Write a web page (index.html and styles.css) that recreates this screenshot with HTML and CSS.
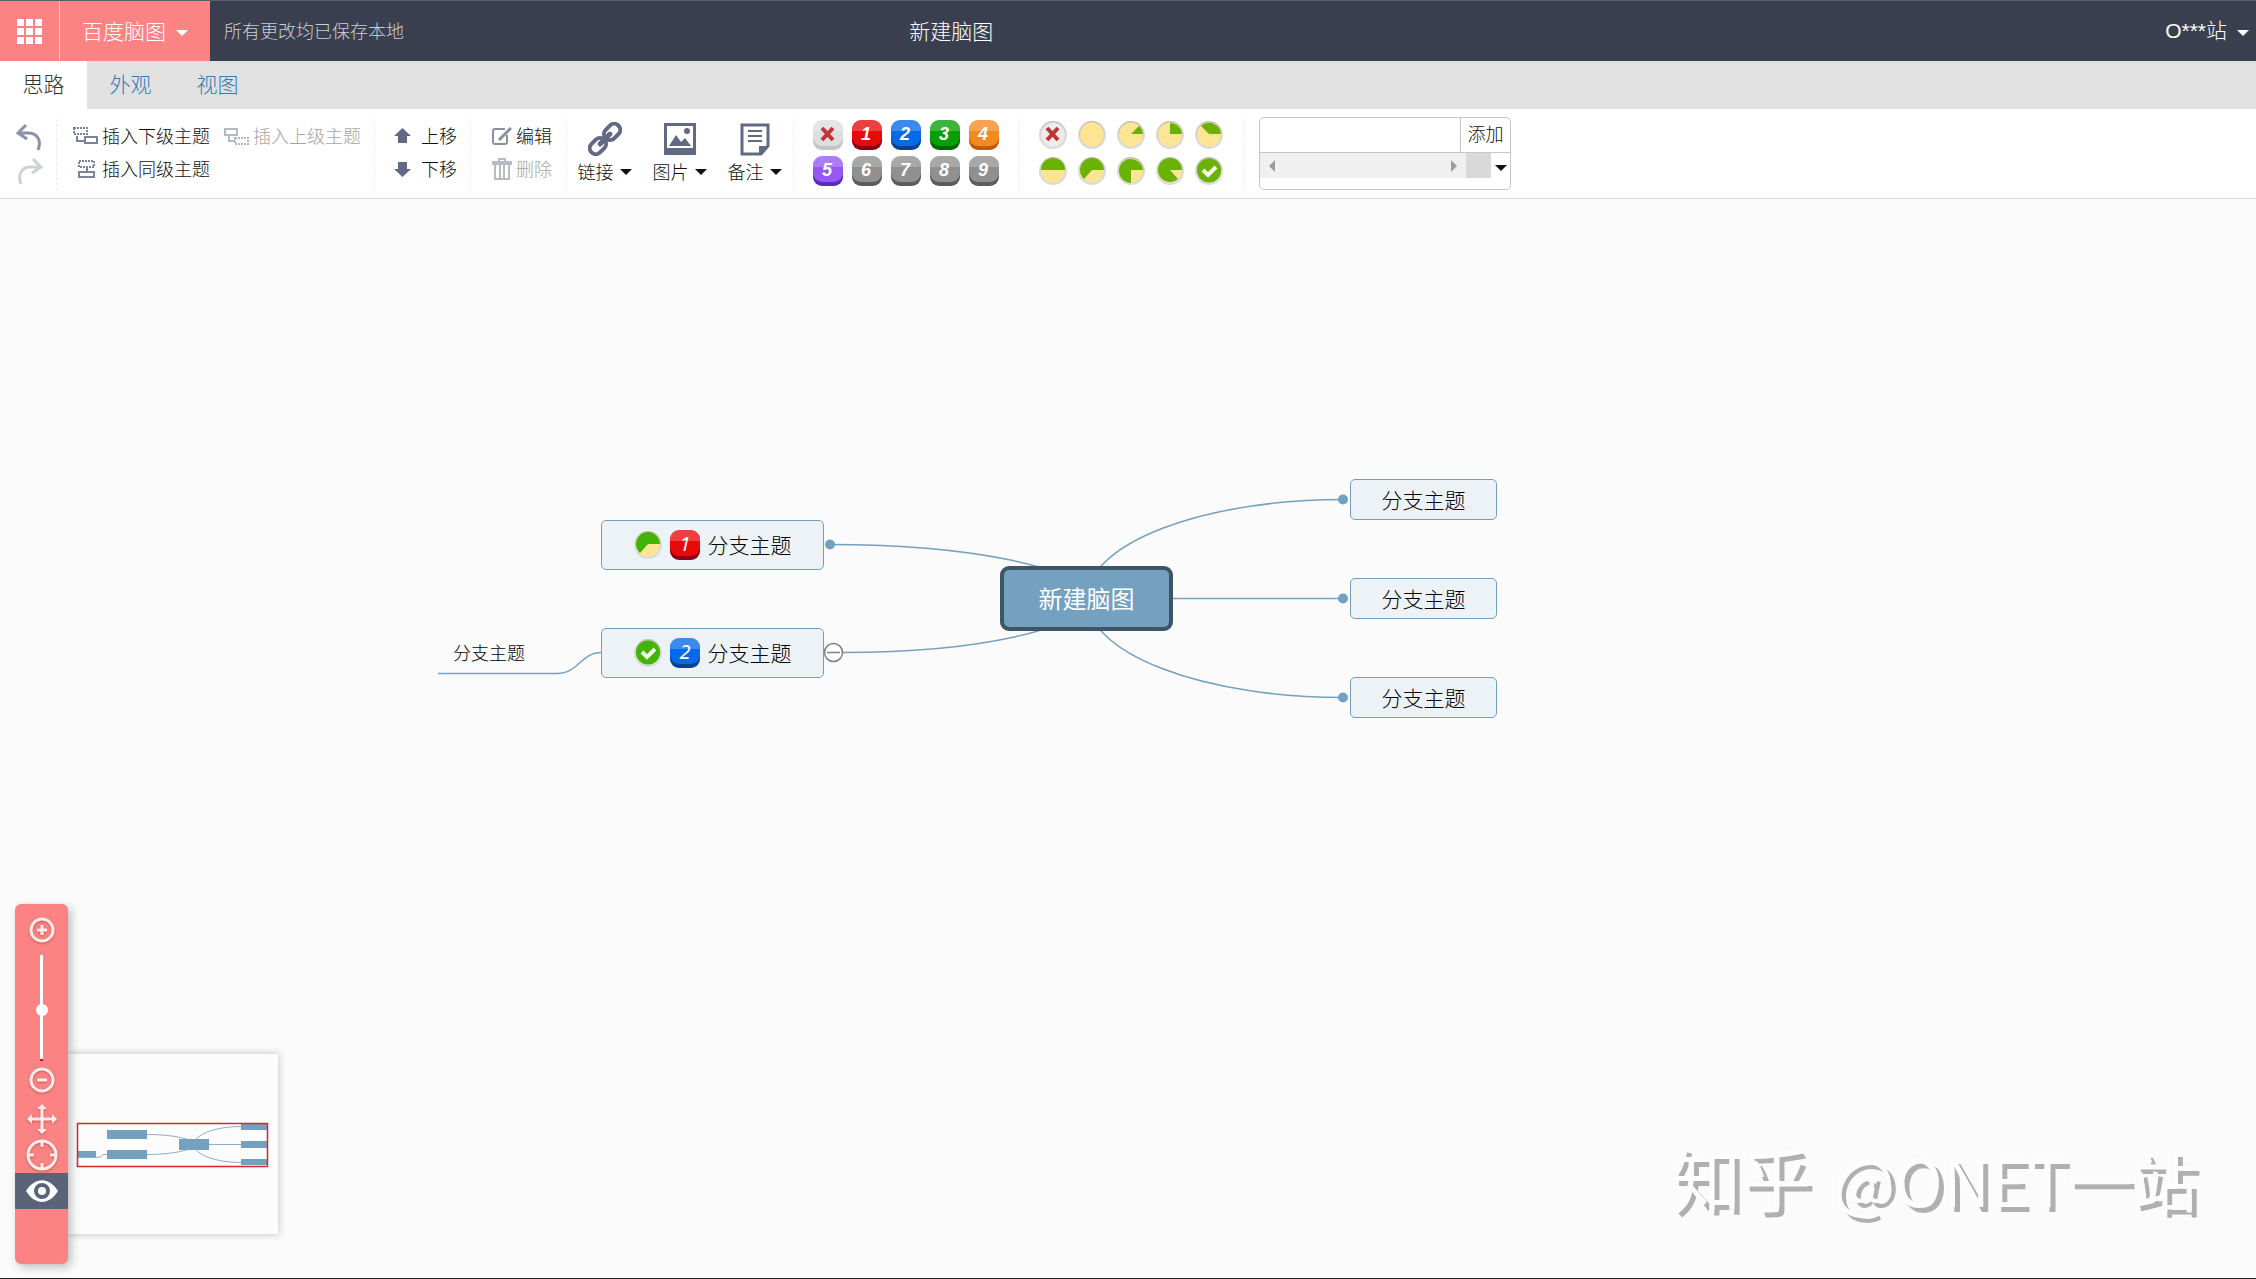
FILE: index.html
```html
<!DOCTYPE html>
<html lang="zh-CN">
<head>
<meta charset="utf-8">
<meta name="viewport" content="width=device-width, initial-scale=1">
<title>新建脑图</title>
<link rel="stylesheet" href="styles.css">
</head>
<body>
<svg class="sprite" aria-hidden="true">
  <symbol id="key" viewBox="0 0 30 30">
    <rect class="key-lip" y="2" width="30" height="28" rx="9"/>
    <rect class="key-face" width="30" height="26" rx="9"/>
    <path fill="#fff" fill-opacity=".22" d="M0 11V9a9 9 0 0 1 9-9h12a9 9 0 0 1 9 9v2z"/>
  </symbol>
  <symbol id="dish" viewBox="0 0 28 28">
    <circle cx="14" cy="14" r="14" fill="#dcdcdc"/>
    <circle cx="14" cy="12.500" r="12.500" fill="#c2c2b8"/>
    <circle class="dish-fill" cx="14" cy="13.500" r="12"/>
  </symbol>
  <symbol id="caret" viewBox="0 0 12 6"><path fill="currentColor" d="M0 0h12L6 6z"/></symbol>
</svg>

<header class="header">
  <button class="apps" aria-label="应用">
    <svg width="25" height="25" viewBox="0 0 25 25" fill="#fff"><path d="M0 0h7v7H0zM9 0h7v7H9zM18 0h7v7h-7zM0 9h7v7H0zM9 9h7v7H9zM18 9h7v7h-7zM0 18h7v7H0zM9 18h7v7H9zM18 18h7v7h-7z"/></svg>
  </button>
  <button class="brand">百度脑图<svg class="caret"><use href="#caret"/></svg></button>
  <p class="status">所有更改均已保存本地</p>
  <h1 class="title">新建脑图</h1>
  <button class="user">O***站<svg class="caret"><use href="#caret"/></svg></button>
</header>

<nav class="tabs">
  <a class="tab active" href="#idea">思路</a>
  <a class="tab" href="#look">外观</a>
  <a class="tab" href="#view">视图</a>
</nav>

<section class="toolbar" aria-label="工具栏">
  <div class="group history">
    <button aria-label="撤销"><svg width="27" height="28" viewBox="0 0 27 28" fill="none" stroke="#8c90a8" stroke-width="3"><path d="M10 2 2 10l9 6M2 10h10c9 0 14 7 10 17"/></svg></button>
    <button aria-label="重做" disabled><svg width="27" height="28" viewBox="0 0 27 28" fill="none" stroke="#cfd1da" stroke-width="3"><path d="m17 2 8 8-9 6M25 10H15C6 10 1 17 5 27"/></svg></button>
  </div>
  <div class="group insert">
    <button class="tool"><svg width="25" height="20" viewBox="0 0 25 20" fill="none" stroke="#7d839b" stroke-width="2"><path stroke-dasharray="2 1" d="M1 2h13v6H1z"/><path d="M4 10v5h7M12 11h12v6H12z"/></svg>插入下级主题</button>
    <button class="tool" disabled><svg width="25" height="20" viewBox="0 0 25 20" fill="none" stroke="#b5b8c5" stroke-width="2"><path d="M1 3h12v6H1zM5 9v6h6"/><path stroke-dasharray="2 1" d="M11 12h13v6H11z"/></svg>插入上级主题</button>
    <button class="tool"><svg width="25" height="20" viewBox="0 0 25 20" fill="none" stroke="#7d839b" stroke-width="2"><path stroke-dasharray="2 1" d="M6 2h15v6H6z"/><path d="M14 8v5M6 13h15v5H6z"/></svg>插入同级主题</button>
  </div>
  <div class="group move">
    <button class="tool"><svg width="17" height="16" viewBox="0 0 17 16" fill="#626983"><path d="m8.500 0 8.500 8h-4v7H4V8H0z"/></svg>上移</button>
    <button class="tool"><svg width="17" height="16" viewBox="0 0 17 16" fill="#626983"><path d="m8.500 16 8.500-8h-4V1H4v7H0z"/></svg>下移</button>
  </div>
  <div class="group edit">
    <button class="tool"><svg width="20" height="20" viewBox="0 0 20 20" fill="none" stroke="#8a8fa3" stroke-width="2"><path d="M13 3H3Q1 3 1 5v11q0 2 2 2h10q2 0 2-2V9"/><path stroke-width="3" d="M19 2 9 12l-2 2"/></svg>编辑</button>
    <button class="tool" disabled><svg width="20" height="22" viewBox="0 0 20 22" fill="none" stroke="#b9bbc4" stroke-width="2"><path d="M1 6V4h18v2zM7 4V1h6v3M3 6v15h14V6M8 7v13M12 7v13"/></svg>删除</button>
  </div>
  <div class="group media">
    <button class="big"><svg width="34" height="34" viewBox="0 0 34 34" fill="none" stroke="#626983" stroke-width="4"><g transform="rotate(-45 17 17)"><rect x="-2" y="11" width="18" height="12" rx="6"/><rect x="18" y="11" width="18" height="12" rx="6"/><path d="M10 17h14" stroke-width="5" stroke-linecap="round"/></g></svg><span>链接<svg class="caret"><use href="#caret"/></svg></span></button>
    <button class="big"><svg width="34" height="34" viewBox="0 0 34 34"><path fill="#626983" fill-rule="evenodd" d="M1 1h32v32H1zM4 4v22h26V4zM6 24l7-11 5 7 4-4 6 8z"/><circle cx="24" cy="9" r="3" fill="#626983"/></svg><span>图片<svg class="caret"><use href="#caret"/></svg></span></button>
    <button class="big"><svg width="34" height="34" viewBox="0 0 34 34" fill="none" stroke="#626983"><path stroke-width="3" d="M4 3h26v21l-7 8H4z"/><path stroke-width="2" d="M10 9h14M10 14h14M10 19h14"/><path fill="#626983" stroke="none" d="M21 33v-9h10z"/></svg><span>备注<svg class="caret"><use href="#caret"/></svg></span></button>
  </div>
  <div class="group marks">
    <button class="key none" aria-label="移除优先级"><svg viewBox="0 0 30 30"><use href="#key"/><path d="m9 8 11 12m0-12L9 20" stroke="#c1323a" stroke-width="4"/></svg></button>
    <button class="key red"><svg viewBox="0 0 30 30"><use href="#key"/><text x="14" y="20">1</text></svg></button>
    <button class="key blue"><svg viewBox="0 0 30 30"><use href="#key"/><text x="14" y="20">2</text></svg></button>
    <button class="key green"><svg viewBox="0 0 30 30"><use href="#key"/><text x="14" y="20">3</text></svg></button>
    <button class="key orange"><svg viewBox="0 0 30 30"><use href="#key"/><text x="14" y="20">4</text></svg></button>
    <button class="key purple"><svg viewBox="0 0 30 30"><use href="#key"/><text x="14" y="20">5</text></svg></button>
    <button class="key gray"><svg viewBox="0 0 30 30"><use href="#key"/><text x="14" y="20">6</text></svg></button>
    <button class="key gray"><svg viewBox="0 0 30 30"><use href="#key"/><text x="14" y="20">7</text></svg></button>
    <button class="key gray"><svg viewBox="0 0 30 30"><use href="#key"/><text x="14" y="20">8</text></svg></button>
    <button class="key gray"><svg viewBox="0 0 30 30"><use href="#key"/><text x="14" y="20">9</text></svg></button>
  </div>
  <div class="group marks">
    <button class="pie none" aria-label="移除进度"><svg viewBox="0 0 28 28"><use href="#dish"/><path d="m8 7 11 12m0-12L8 19" stroke="#c1323a" stroke-width="4"/></svg></button>
    <button class="pie" aria-label="未开始"><svg viewBox="0 0 28 28"><use href="#dish"/></svg></button>
    <button class="pie" aria-label="完成 1/8"><svg viewBox="0 0 28 28"><use href="#dish"/><path d="M14 13h12a12 12 0 0 0-4-8z"/></svg></button>
    <button class="pie" aria-label="完成 1/4"><svg viewBox="0 0 28 28"><use href="#dish"/><path d="M14 13h12A12 12 0 0 0 14 2z"/></svg></button>
    <button class="pie" aria-label="完成 3/8"><svg viewBox="0 0 28 28"><use href="#dish"/><path d="M14 13h12A12 12 0 0 0 6 5z"/></svg></button>
    <button class="pie" aria-label="完成一半"><svg viewBox="0 0 28 28"><use href="#dish"/><path d="M14 13h12a12 12 0 0 0-24 0z"/></svg></button>
    <button class="pie" aria-label="完成 5/8"><svg viewBox="0 0 28 28"><use href="#dish"/><path d="M14 13h12A12 12 0 1 0 6 22z"/></svg></button>
    <button class="pie" aria-label="完成 3/4"><svg viewBox="0 0 28 28"><use href="#dish"/><path d="M14 13h12A12 12 0 1 0 14 26z"/></svg></button>
    <button class="pie" aria-label="完成 7/8"><svg viewBox="0 0 28 28"><use href="#dish"/><path d="M14 13h12A12 12 0 1 0 22 22z"/></svg></button>
    <button class="pie done" aria-label="已完成"><svg viewBox="0 0 28 28"><use href="#dish"/><path class="tick" d="m8 13 5 5 8-8"/></svg></button>
  </div>
  <div class="group tags">
    <div class="tagbox">
      <input type="text" aria-label="标签">
      <button class="add">添加</button>
      <div class="tagscroll">
        <svg width="6" height="12" viewBox="0 0 6 12" fill="#9c9c9c"><path d="M6 0v12L0 6z"/></svg>
        <svg width="6" height="12" viewBox="0 0 6 12" fill="#9c9c9c"><path d="M0 0v12l6-6z"/></svg>
      </div>
      <button class="more" aria-label="更多标签"><svg class="caret"><use href="#caret"/></svg></button>
    </div>
  </div>
</section>

<main class="canvas">
  <svg class="links" aria-hidden="true">
    <g fill="none" stroke="#73a1bf" stroke-width="1.500">
      <path d="M1087 399.500A256 99 0 0 1 1343 300.500M1087 399.500H1343M1087 399.500A256 99 0 0 0 1343 498.500"/>
      <path d="M1087 399.500A257 54 0 0 0 830 345.500M1087 399.500A244 54 0 0 1 843 453.500"/>
      <path d="M438 474.500H557C579 474.500 580 453.500 602 453.500"/>
    </g>
    <g fill="#73a1bf"><circle cx="1343" cy="300.500" r="5"/><circle cx="1343" cy="399.500" r="5"/><circle cx="1343" cy="498.500" r="5"/><circle cx="830" cy="345.500" r="5"/></g>
    <g fill="#fff" stroke="#808080" stroke-width="1.500"><circle cx="833.500" cy="453.500" r="9"/><path d="M827 453.500h13"/></g>
  </svg>
  <div class="node root">新建脑图</div>
  <div class="node branch r1">分支主题</div>
  <div class="node branch r2">分支主题</div>
  <div class="node branch r3">分支主题</div>
  <div class="node branch l1">
    <svg class="pie" viewBox="0 0 28 28"><use href="#dish"/><path d="M14 13h12A12 12 0 1 0 6 22z"/></svg>
    <svg class="key red" viewBox="0 0 30 30"><use href="#key"/><text x="15" y="21">1</text></svg>
    分支主题
  </div>
  <div class="node branch l2">
    <svg class="pie done" viewBox="0 0 28 28"><use href="#dish"/><path class="tick" d="m8 13 5 5 8-8"/></svg>
    <svg class="key blue" viewBox="0 0 30 30"><use href="#key"/><text x="15" y="21">2</text></svg>
    分支主题
  </div>
  <div class="node leaf">分支主题</div>

  <div class="preview">
    <svg width="210" height="180" viewBox="0 0 210 180">
      <g fill="none" stroke="#8fadc9"><path d="M126 90.500A47 18 0 0 1 173 72.500M126 90.500H173M126 90.500A47 18 0 0 0 173 108.500M126 90.500A47 10 0 0 0 79 80.500M126 90.500A47 10 0 0 1 79 100.500M10 103.500H28Q34 103.500 35 100.500H40"/></g>
      <path fill="#73a1bf" d="M10 97h18v6H10zM39 76h40v9H39zM39 96h40v9H39zM111 85h30v11h-30zM173 70h26v6h-26zM173 87h26v7h-26zM173 105h26v6h-26z"/>
      <path fill="none" stroke="#d9252b" stroke-width="1.500" d="M9.500 69.500h190v43H9.500z"/>
    </svg>
  </div>
  <div class="navigator">
    <button aria-label="放大"><svg class="glow" width="26" height="26" viewBox="0 0 26 26"><circle cx="13" cy="13" r="11"/><path d="M13 8v10M8 13h10"/></svg></button>
    <input class="zoom" type="range" min="0" max="100" value="48" aria-label="缩放">
    <button aria-label="缩小"><svg class="glow" width="26" height="26" viewBox="0 0 26 26"><circle cx="13" cy="13" r="11"/><path d="M8 13h10"/></svg></button>
    <button aria-label="拖动"><svg class="glow" width="32" height="32" viewBox="0 0 32 32"><path d="M16 4v24M4 16h24"/><path fill="#ffeceb" stroke="none" d="m16 1 5 5H11zM16 31l5-5H11zM1 16l5-5v10zM31 16l-5-5v10z"/></svg></button>
    <button aria-label="定位根节点"><svg class="glow" width="32" height="32" viewBox="0 0 32 32"><circle cx="16" cy="16" r="14"/><path d="M16 2v6M16 24v6M2 16h6M24 16h6"/></svg></button>
    <button class="eye" aria-label="缩略图"><svg width="32" height="22" viewBox="0 0 32 22"><path fill="#fff" fill-rule="evenodd" d="M0 11C9-3.500 23-3.500 32 11 23 25.500 9 25.500 0 11zM16 3a8 8 0 1 0 0 16 8 8 0 0 0 0-16z"/><circle cx="16" cy="11" r="4" fill="#fff"/></svg></button>
  </div>
  <p class="watermark"><span class="site">知乎</span><span>@ONET一站</span></p>
</main>
</body>
</html>
```
FILE: styles.css
```css
* { box-sizing: border-box; }

body {
  margin: 0;
  min-height: 100vh;
  display: flex;
  flex-direction: column;
  font: 300 18px/24px "Noto Sans", "Noto Sans CJK SC", sans-serif;
  color: #111;
  background: #fbfbfb;
}

button, input { font: inherit; color: inherit; }
button { padding: 0; border: 0; background: none; white-space: nowrap; }
button svg { flex: none; }
p, h1 { margin: 0; }

.sprite { position: absolute; width: 0; height: 0; }
.caret { width: 12px; height: 6px; flex: none; }

/* Header */
.header {
  display: flex;
  align-items: stretch;
  height: 61px;
  background: #3a3f4f;
  border-top: 1px solid #5c606e;
  color: #fff;
  font-size: 21px;
}
.apps {
  display: flex;
  align-items: center;
  justify-content: center;
  width: 60px;
  background: #fc8383;
  border-right: 1px solid #fdc4c4;
}
.brand {
  display: flex;
  align-items: center;
  justify-content: center;
  gap: 10px;
  width: 150px;
  background: #fc8383;
}
.brand .caret, .user .caret { margin-top: 4px; }
.status {
  flex: 0 0 31%;
  align-self: center;
  padding-left: 14px;
  font-size: 18px;
  color: #ccced4;
}
.title { align-self: center; font-size: 21px; font-weight: 300; }
.user {
  display: flex;
  align-items: center;
  gap: 10px;
  margin-left: auto;
  padding-right: 7px;
  font-family: "Liberation Sans", "Noto Sans CJK SC", sans-serif;
}

/* Tabs */
.tabs { display: flex; height: 48px; background: #e1e1e1; font-size: 21px; }
.tab {
  display: flex;
  align-items: center;
  justify-content: center;
  width: 87px;
  padding-bottom: 2px;
  color: #337ab7;
  text-decoration: none;
}
.tab.active { background: #fff; color: #333; }

/* Toolbar */
.toolbar {
  display: flex;
  height: 90px;
  padding: 10px 0 8px;
  background: #fff;
  border-bottom: 1px solid #d9d9d9;
}
.group { border-right: 1px dashed #eee; }
.history { display: grid; grid-auto-rows: 34px; width: 57px; padding: 4px 14px 0 16px; }
.history button { display: flex; }
.insert, .move, .edit { display: grid; grid-auto-rows: 33px; justify-items: start; }
.insert { grid-template-columns: auto auto; column-gap: 14px; padding: 0 13px 0 16px; }
.move { padding: 0 13px 0 19px; }
.edit { padding: 0 14px 0 21px; }
.tool { display: flex; align-items: center; gap: 4px; }
.move .tool { gap: 10px; }
.tool:disabled { color: #a5a5a5; }
.media { display: flex; padding-right: 1px; }
.big {
  display: flex;
  flex-direction: column;
  align-items: center;
  gap: 4px;
  width: 75px;
  padding-top: 3px;
}
.big span { display: flex; align-items: center; gap: 6px; }
.marks {
  display: grid;
  grid-template-columns: repeat(5, 39px);
  grid-auto-rows: 36px;
  padding: 1px 10px 0 19px;
}
.marks button { display: flex; align-items: center; justify-content: center; width: 30px; height: 30px; }
.tags { padding-left: 15px; border-right: 0; }

/* Priority keys and progress pies */
.key { --face: #909090; --lip: #5c5c5c; }
.key.none { --face: #dedede; --lip: #c4c4c4; }
.key.red { --face: #e80a0a; --lip: #8c0016; }
.key.blue { --face: #056ae8; --lip: #05428f; }
.key.green { --face: #06a006; --lip: #056605; }
.key.orange { --face: #f28a21; --lip: #c25c08; }
.key.purple { --face: #9558f2; --lip: #592ac2; }
.key-face { fill: var(--face); }
.key-lip { fill: var(--lip); }
.key svg, svg.key { width: 30px; height: 30px; }
.key text {
  fill: #fff;
  font: italic 700 18px "Liberation Sans", sans-serif;
  text-anchor: middle;
}
.node .key text { font: italic 400 20px "Noto Sans", sans-serif; }
.pie { --dish: #fee593; }
.pie.none { --dish: #ececec; }
.pie.done { --dish: #6bb206; }
.dish-fill { fill: var(--dish); }
.pie svg, svg.pie { width: 28px; height: 28px; }
.pie path { fill: #6bb206; }
.node .pie path { fill: #42b406; }
.node .pie.done { --dish: #42b406; }
.pie .tick, .node .pie .tick { fill: none; stroke: #f4fbe8; stroke-width: 4; }

/* Tag editor */
.tagbox {
  display: grid;
  grid-template-columns: 1fr 31px 19px;
  grid-template-rows: 35px 25px;
  width: 252px;
  height: 73px;
  margin-top: -2px;
  border: 1px solid #c6c6c6;
  border-radius: 5px;
}
.tagbox input { min-width: 0; border: 0; padding: 0 6px; border-bottom: 1px solid #c6c6c6; background: none; }
.add {
  grid-column: 2 / 4;
  padding-bottom: 2px;
  border: solid #c6c6c6;
  border-width: 0 0 1px 1px;
}
.tagscroll {
  grid-column: 1 / 3;
  display: flex;
  align-items: center;
  justify-content: space-between;
  padding: 0 9px;
  background: #f0f0f0;
  border-right: 25px solid #d9d9d9;
}
.more { display: flex; align-items: center; justify-content: center; padding-top: 4px; }

/* Mind map canvas */
.canvas {
  position: relative;
  flex: 1;
  min-height: 600px;
  overflow: hidden;
  border-bottom: 1px solid #1c1c1c;
}
.links { position: absolute; inset: 0; width: 100%; height: 100%; }
.node {
  position: absolute;
  display: flex;
  align-items: center;
  justify-content: center;
  color: #000;
  white-space: nowrap;
}
.root {
  left: 1000px;
  top: 367px;
  width: 173px;
  height: 65px;
  border: 4px solid #3d5566;
  border-radius: 9px;
  background: #73a1bf;
  color: #fff;
  font-size: 24px;
  font-weight: 400;
}
.branch {
  width: 147px;
  height: 41px;
  border: 1px solid #739fbc;
  border-radius: 5px;
  background: #ecf2f6;
  font-size: 21px;
}
.r1, .r2, .r3 { left: 1350px; }
.r1 { top: 280px; }
.r2 { top: 379px; }
.r3 { top: 478px; }
.l1, .l2 { left: 601px; width: 223px; height: 50px; gap: 8px; }
.l1 { top: 321px; }
.l2 { top: 429px; }
.leaf { left: 453px; top: 442px; }

/* Navigator */
.navigator {
  position: absolute;
  left: 15px;
  bottom: 14px;
  display: flex;
  flex-direction: column;
  align-items: center;
  width: 53px;
  height: 360px;
  padding-top: 8px;
  border-radius: 6px;
  background: #fc8383;
  box-shadow: 3px 3px 10px rgba(0, 0, 0, .25);
}
.navigator button { display: flex; align-items: center; justify-content: center; width: 100%; height: 36px; }
.navigator button:nth-of-type(2) { margin-bottom: 3px; }
.glow { fill: none; stroke: #ffeceb; stroke-width: 3; filter: drop-shadow(0 1px 1px rgba(150, 40, 40, .5)); }
.zoom {
  appearance: none;
  writing-mode: vertical-lr;
  direction: rtl;
  width: 12px;
  height: 106px;
  margin: 7px 0 1px;
  background: linear-gradient(#fff 104px, #d8102a 104px) center / 3px 100% no-repeat;
}
.zoom::-webkit-slider-thumb {
  appearance: none;
  width: 12px;
  height: 12px;
  border-radius: 50%;
  background: #fff;
}
.navigator .eye { background: #5a6378; }
.preview {
  position: absolute;
  left: 68px;
  bottom: 44px;
  width: 210px;
  height: 180px;
  background: #fcfcfc;
  box-shadow: 0 0 8px rgba(0, 0, 0, .25);
}
.preview svg { display: block; }

.watermark {
  position: absolute;
  right: 59px;
  bottom: 54px;
  display: flex;
  align-items: baseline;
  gap: 22px;
  font: 400 65px/90px "Noto Sans CJK SC", sans-serif;
  color: #fdfdfd;
  text-shadow: 5px 5px 0 #b0b0b0;
}
.site { font-size: 70px; }
```
